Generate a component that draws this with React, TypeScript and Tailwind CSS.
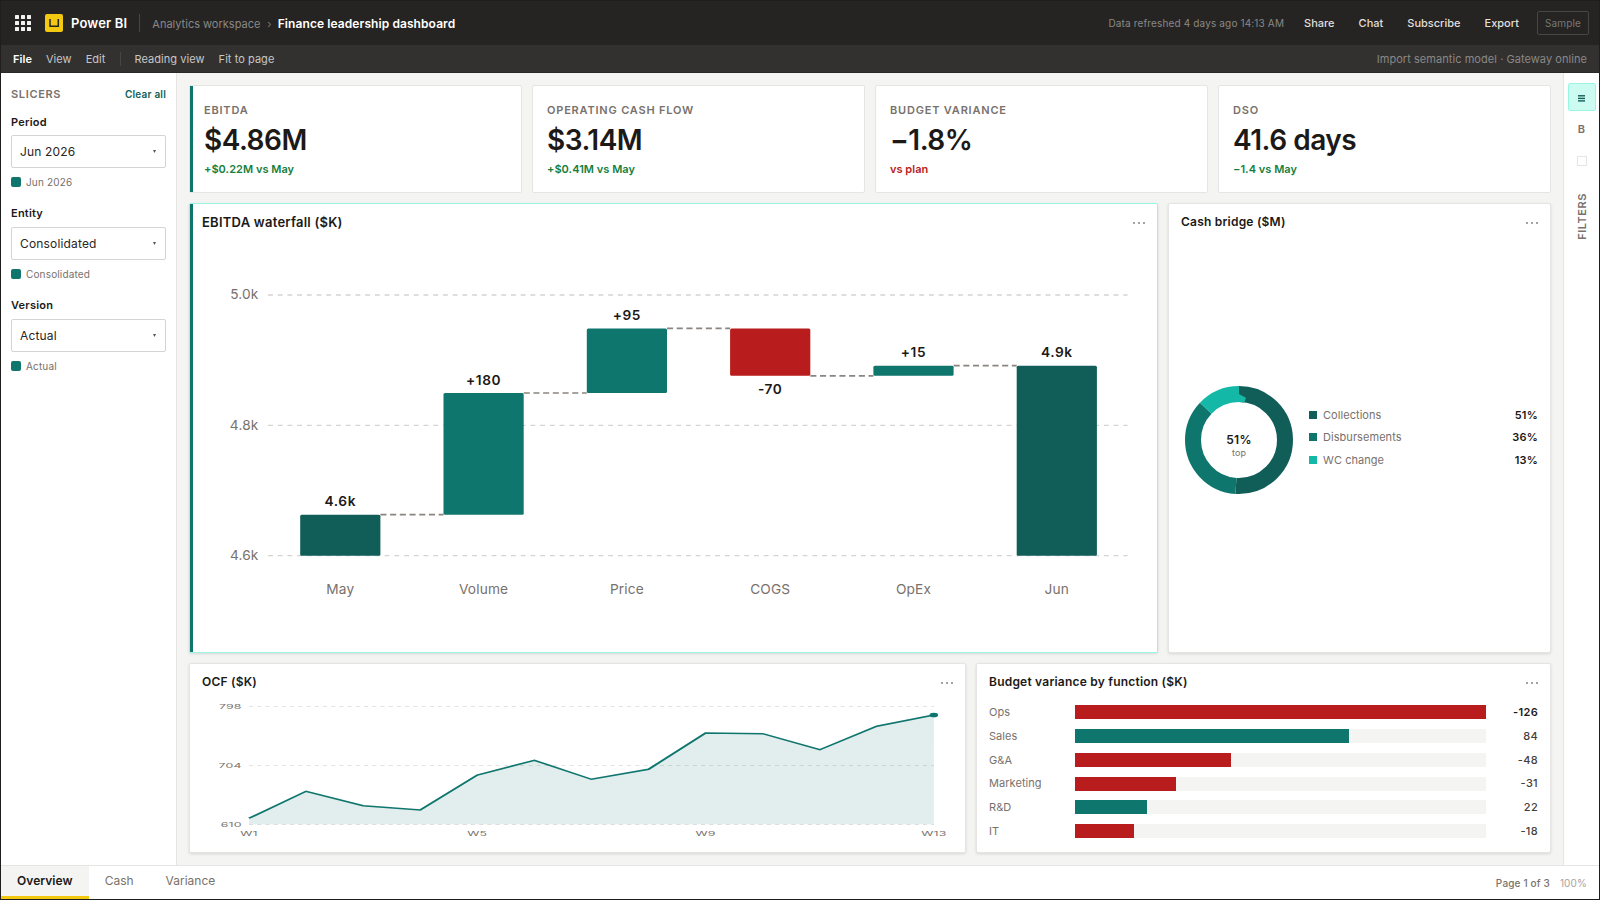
const slicers = [
  { label: 'Period', value: 'Jun 2026' },
  { label: 'Entity', value: 'Consolidated' },
  { label: 'Version', value: 'Actual' },
]

const kpis = [
  { label: 'EBITDA', value: '$4.86M', delta: '+$0.22M vs May', good: true },
  { label: 'OPERATING CASH FLOW', value: '$3.14M', delta: '+$0.41M vs May', good: true },
  { label: 'BUDGET VARIANCE', value: '−1.8%', delta: 'vs plan', good: false },
  { label: 'DSO', value: '41.6 days', delta: '−1.4 vs May', good: true },
]

// top and bottom are the bar's edges, link is where the dashed connector leaves it
const waterfall = [
  { name: 'May', text: '4.6k', top: 279.7, bottom: 320.7, link: 279.7, color: '#115e59' },
  { name: 'Volume', text: '+180', top: 158, bottom: 279.7, link: 158, color: '#0f766e' },
  { name: 'Price', text: '+95', top: 93.4, bottom: 158, link: 93.4, color: '#0f766e' },
  { name: 'COGS', text: '-70', top: 93.4, bottom: 140.8, link: 140.8, color: '#b91c1c' },
  { name: 'OpEx', text: '+15', top: 130.7, bottom: 140.8, link: 130.7, color: '#0f766e' },
  { name: 'Jun', text: '4.9k', top: 130.7, bottom: 320.7, link: null, color: '#115e59' },
]

const cash = [
  { name: 'Collections', pct: 51, color: '#115e59' },
  { name: 'Disbursements', pct: 36, color: '#0f766e' },
  { name: 'WC change', pct: 13, color: '#14b8a6' },
]

const ocf = [161.7, 125.7, 144.9, 150.7, 104, 84.4, 109.7, 96.4, 48, 48.9, 70.3, 39, 24]

const variance = [
  { name: 'Ops', value: -126 },
  { name: 'Sales', value: 84 },
  { name: 'G&A', value: -48 },
  { name: 'Marketing', value: -31 },
  { name: 'R&D', value: 22 },
  { name: 'IT', value: -18 },
]

function Header() {
  return (
    <header className="h-11 shrink-0 bg-[#252423] flex items-center pl-3.5 pr-2.5 text-[11px] text-white">
      <svg width="16" height="16" viewBox="0 0 16 16" fill="#f3f2f1">
        {[0, 6, 12].map((y) => [0, 6, 12].map((x) => <rect key={`${x}-${y}`} x={x} y={y} width="4" height="4" rx="0.5" />))}
      </svg>
      <svg className="ml-3.5" width="18" height="18" viewBox="0 0 18 18">
        <rect width="18" height="18" rx="2" fill="#f2c811" />
        <path d="M5 5V12.3H13.3V5" fill="none" stroke="#252423" strokeWidth="1.5" />
      </svg>
      <span className="ml-2 pt-0.5 text-[13px] font-semibold">Power BI</span>
      <div className="ml-3 w-px h-[18px] bg-[#484644]" />
      <span className="ml-3 pt-0.5 tracking-normal text-[#8a8886]">Analytics workspace</span>
      <span className="ml-[7px] pt-0.5 text-[#797775]">›</span>
      <span className="ml-1.5 pt-0.5 text-[12px] font-semibold tracking-[0.007em]">Finance leadership dashboard</span>
      <span className="ml-auto pt-px text-[10px] tracking-[0.015em] text-[#8a8886]">Data refreshed 4 days ago 14:13 AM</span>
      <nav className="ml-5 pt-px flex items-center gap-6 font-medium tracking-normal text-[#e1dfdd]">
        <span>Share</span>
        <span>Chat</span>
        <span>Subscribe</span>
        <span>Export</span>
      </nav>
      <span className="ml-[18px] h-6 px-[7px] pt-px flex items-center border border-[#484644] rounded-xs text-[10px] tracking-[0.015em] text-[#797775]">Sample</span>
    </header>
  )
}

function Menu() {
  return (
    <div className="h-7 shrink-0 bg-[#323130] border-b border-[#292827] flex items-center px-3 pt-px text-[11px] tracking-[0.005em] text-[#c8c6c4]">
      <span className="font-semibold text-white">File</span>
      <span className="ml-3.5">View</span>
      <span className="ml-3.5">Edit</span>
      <div className="mx-3.5 w-px h-3.5 bg-[#484644]" />
      <span>Reading view</span>
      <span className="ml-3.5">Fit to page</span>
      <span className="ml-auto text-[#8a8886]">Import semantic model · Gateway online</span>
    </div>
  )
}

function Sidebar() {
  return (
    <aside className="w-[176px] shrink-0 bg-white border-r border-[#e7e5e4] px-2.5 pt-[13px]">
      <div className="flex items-center justify-between h-4">
        <span className="text-[11px] font-semibold tracking-[0.06em] text-[#78716c]">SLICERS</span>
        <span className="text-[10px] font-semibold tracking-[0.02em] text-[#115e59]">Clear all</span>
      </div>
      <div className="pt-[11.5px]">
        {slicers.map((s) => (
          <div key={s.label} className="h-[91.9px]">
            <div className="h-4 text-[11px] leading-4 font-semibold tracking-[0.02em] text-[#1c1917]">{s.label}</div>
            <div className="mt-[5.8px] h-[33px] px-2 flex items-center justify-between border border-[#d6d3d1] rounded-xs text-[12px] text-[#292524]">
              {s.value}
              <svg width="3" height="3" viewBox="0 0 3 3" className="mr-px">
                <path d="M0 0H3L1.5 3Z" fill="#57534e" />
              </svg>
            </div>
            <div className="mt-2 h-3 flex items-center gap-[5px] text-[10px] tracking-[0.016em] text-[#78716c]">
              <span className="size-2.5 rounded-xs bg-[#0f766e]" />
              {s.value}
            </div>
          </div>
        ))}
      </div>
    </aside>
  )
}

function CardTitle({ title, big }: { title: string; big?: boolean }) {
  return (
    <div className="flex items-center justify-between h-4">
      <h2 className={`font-semibold tracking-[0.018em] text-[#1c1917] ${big ? 'pt-px text-[13px]' : 'text-[12px]'}`}>{title}</h2>
      <span className="flex gap-[3px] pt-0.5">
        <i className="size-0.5 bg-[#a8a29e]" />
        <i className="size-0.5 bg-[#a8a29e]" />
        <i className="size-0.5 bg-[#a8a29e]" />
      </span>
    </div>
  )
}

function Waterfall() {
  return (
    <svg className="block" width="943" height="406" viewBox="0 0 943 406" fontSize="13.7">
      {[['5.0k', 60], ['4.8k', 190.4], ['4.6k', 320.7]].map(([t, y]) => (
        <g key={t}>
          <line x1="66" x2="925.5" y1={y} y2={y} stroke="#d6d3d1" strokeWidth="1.3" strokeDasharray="4.86 4.86" />
          <text x="56.5" y={Number(y) + 4.2} textAnchor="end" fill="#78716c">{t}</text>
        </g>
      ))}
      {waterfall.map((b, i) => {
        const x = 98.2 + i * 143.3
        return (
          <g key={b.name}>
            {b.link !== null && (
              <line x1={x + 80.2} x2={x + 143.3} y1={b.link} y2={b.link} stroke="#8a8580" strokeWidth="1.7" strokeDasharray="6.07 3.64" />
            )}
            <rect x={x} y={b.top} width="80.2" height={b.bottom - b.top} rx="1.5" fill={b.color} />
            <text
              x={x + 40.1}
              y={b.text === '-70' ? b.bottom + 18 : b.top - 8.5}
              textAnchor="middle"
              fontWeight="600"
              letterSpacing="0.6"
              fill="#1c1917"
            >
              {b.text}
            </text>
            <text x={x + 40.1} y="359.4" textAnchor="middle" fill="#78716c">{b.name}</text>
          </g>
        )
      })}
    </svg>
  )
}

function Donut() {
  const c = 2 * Math.PI * 46
  let start = 0
  return (
    <svg width="108" height="108" viewBox="0 0 108 108">
      {cash.map((s) => {
        const offset = start
        start += s.pct
        return (
          <circle
            key={s.name}
            cx="54"
            cy="54"
            r="46"
            fill="none"
            stroke={s.color}
            strokeWidth="16"
            strokeDasharray={`${(s.pct / 100) * c} ${c}`}
            strokeDashoffset={(-offset / 100) * c}
            transform="rotate(-90 54 54)"
          />
        )
      })}
      <path d="M53.8 8L61 11.7L59.4 16.4Q56.5 16 53.8 16Z" fill="#14b8a6" />
      <text x="54" y="57.8" textAnchor="middle" fontSize="12" fontWeight="600" letterSpacing="0.3" fill="#1c1917">51%</text>
      <text x="54" y="70" textAnchor="middle" fontSize="9" fill="#78716c">top</text>
    </svg>
  )
}

function OcfChart() {
  const pts = ocf.map((y, i) => `${34.3 + i * 41.67},${y}`).join(' ')
  return (
    <svg className="block" width="752" height="144" viewBox="0 0 549 192" preserveAspectRatio="none" fontSize="9" fill="#78716c">
      {[['798', 12.4], ['704', 91.2], ['610', 169.7]].map(([t, y]) => (
        <g key={t}>
          <line x1="34.3" x2="534.3" y1={y} y2={y} stroke="#dcdad8" strokeDasharray="3 3" />
          <text x="29" y={Number(y) + 3.3} textAnchor="end">{t}</text>
        </g>
      ))}
      <polygon points={`34.3,169.7 ${pts} 534.3,169.7`} fill="#0f766e" fillOpacity="0.12" />
      <polyline points={pts} fill="none" stroke="#0f766e" strokeWidth="2" />
      <circle cx="534.3" cy="24" r="3.1" fill="#0f766e" />
      {['W1', 'W5', 'W9', 'W13'].map((t, i) => (
        <text key={t} x={34.3 + i * 166.67} y="185.3" textAnchor="middle">{t}</text>
      ))}
    </svg>
  )
}

export default function App() {
  return (
    <div className="w-[1600px] h-[900px] flex flex-col overflow-hidden border border-[#1f1e1d] bg-[#f4f4f3] font-['Inter',sans-serif] tracking-[0.01em]">
      <Header />
      <Menu />

      <div className="flex flex-1 min-h-0">
        <Sidebar />

        <main className="flex-1 min-w-0 p-3 flex flex-col gap-2.5">
          {/* KPI cards */}
          <div className="grid grid-cols-4 gap-2.5 h-[108px]">
            {kpis.map((k, i) => (
              <div key={k.label} className="relative bg-white border border-[#e7e5e4] rounded-xs pl-3.5 pt-4">
                {i === 0 && <div className="absolute left-0 inset-y-0 w-[3px] bg-[#0f766e]" />}
                <div className="h-4 text-[11px] leading-4 font-semibold tracking-[0.073em] text-[#78716c]">{k.label}</div>
                <div className="mt-1.5 h-8 text-[28px] leading-8 font-semibold tracking-[-0.018em] text-[#1c1917]">{k.value}</div>
                <div className={`mt-[5px] h-4 text-[11px] leading-4 font-semibold tracking-[0.003em] ${k.good ? 'text-[#15803d]' : 'text-[#b91c1c]'}`}>{k.delta}</div>
              </div>
            ))}
          </div>

          <div className="flex gap-2.5 h-[450px]">
            <section className="relative w-[969px] bg-white border border-[#99f6e4] rounded-xs px-3 pt-2.5 shadow-[0_1px_3px_rgba(0,0,0,0.12)]">
              <div className="absolute left-0 inset-y-0 w-[3px] bg-[#0f766e]" />
              <CardTitle title="EBITDA waterfall ($K)" big />
              <div className="pt-[5px]">
                <Waterfall />
              </div>
            </section>

            <section className="flex-1 bg-white border border-[#e7e5e4] rounded-xs px-3 pt-2.5 flex flex-col shadow-[0_1px_3px_rgba(0,0,0,0.12)]">
              <CardTitle title="Cash bridge ($M)" />
              <div className="flex-1 flex items-center pl-1 pb-0.5">
                <Donut />
                <div className="flex-1 ml-4 pb-1.5 flex flex-col gap-[6.5px] text-[11px] leading-4">
                  {cash.map((s) => (
                    <div key={s.name} className="flex items-center">
                      <span className="size-2" style={{ backgroundColor: s.color }} />
                      <span className="ml-1.5 tracking-[0.005em] text-[#78716c]">{s.name}</span>
                      <span className="ml-auto font-semibold tracking-[0.02em] text-[#1c1917]">{s.pct}%</span>
                    </div>
                  ))}
                </div>
              </div>
            </section>
          </div>

          <div className="flex gap-2.5 h-[190px]">
            <section className="w-[777px] bg-white border border-[#e7e5e4] rounded-xs px-3 pt-2.5 shadow-[0_1px_3px_rgba(0,0,0,0.12)]">
              <CardTitle title="OCF ($K)" />
              <div className="pt-[7px]">
                <OcfChart />
              </div>
            </section>

            <section className="flex-1 bg-white border border-[#e7e5e4] rounded-xs px-3 pt-2.5 shadow-[0_1px_3px_rgba(0,0,0,0.12)]">
              <CardTitle title="Budget variance by function ($K)" />
              <div className="pt-[10.4px] text-[11px]">
                {variance.map((v) => (
                  <div key={v.name} className="flex items-center h-[23.8px]">
                    <span className="w-[86px] tracking-[0.005em] text-[#78716c]">{v.name}</span>
                    <div className="w-[410.5px] h-3.5 bg-[#f4f4f3]">
                      <div
                        className={v.value < 0 ? 'h-full bg-[#b91c1c]' : 'h-full bg-[#0f766e]'}
                        style={{ width: `${(Math.abs(v.value) / 126) * 100}%` }}
                      />
                    </div>
                    <span className={`ml-auto tracking-[0.03em] ${v.name === 'Ops' ? 'font-semibold text-[#1c1917]' : 'font-medium text-[#44403c]'}`}>{v.value}</span>
                  </div>
                ))}
              </div>
            </section>
          </div>
        </main>

        {/* Filters rail */}
        <aside className="w-9 shrink-0 bg-white border-l border-[#e7e5e4] flex flex-col items-center pt-2.5 text-[11px] font-semibold text-[#78716c]">
          <div className="size-7 flex items-center justify-center rounded-xs bg-[#ccfbf1] border border-[#99f6e4]">
            <svg width="7" height="7" viewBox="0 0 7 7" className="mt-0.5" fill="#115e59">
              <rect width="7" height="1.4" y="0.1" />
              <rect width="7" height="1.4" y="2.7" />
              <rect width="7" height="1.4" y="5.2" />
            </svg>
          </div>
          <div className="mt-1 size-7 flex items-center justify-center">B</div>
          <div className="mt-[13px] size-2.5 border border-[#e7e5e4]" />
          <div className="mt-[27px] ml-0.5 tracking-[0.05em] rotate-180 [writing-mode:vertical-rl]">FILTERS</div>
        </aside>
      </div>

      {/* Page tabs */}
      <footer className="h-[34px] shrink-0 bg-white border-t border-[#e7e5e4] flex items-stretch text-[12px] tracking-normal text-[#78716c]">
        <div className="px-4 flex items-center bg-[#f4f4f3] border-b-[3px] border-[#f2c811] font-semibold tracking-[0.004em] text-[#1c1917]">Overview</div>
        <div className="px-4 flex items-center pb-[3px]">Cash</div>
        <div className="px-4 flex items-center pb-[3px]">Variance</div>
        <div className="ml-auto pr-3 pt-0.5 flex items-center gap-2.5 text-[10px] tracking-[0.015em]">
          <span className="font-medium">Page 1 of 3</span>
          <span className="text-[#a8a29e]">100%</span>
        </div>
      </footer>
    </div>
  )
}
